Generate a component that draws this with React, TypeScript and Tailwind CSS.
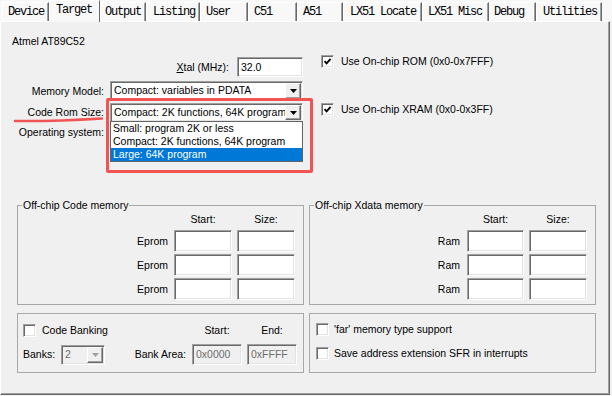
import React from 'react';

const sunken =
  'border border-t-[#a0a0a0] border-l-[#a0a0a0] border-r-white border-b-white shadow-[inset_1px_1px_0_#696969,inset_-1px_-1px_0_#e3e3e3]';

const tabs = [
  { label: 'Device', w: 'w-[47px]', pl: 'pl-[5px]' },
  { label: 'Target', w: 'w-[51px]', pl: 'pl-[6px]', active: true },
  { label: 'Output', w: 'w-[46px]', pl: 'pl-[4px]' },
  { label: 'Listing', w: 'w-[54px]', pl: 'pl-[6px]' },
  { label: 'User', w: 'w-[48px]', pl: 'pl-[5px]' },
  { label: 'C51', w: 'w-[49px]', pl: 'pl-[5px]' },
  { label: 'A51', w: 'w-[46px]', pl: 'pl-[5px]' },
  { label: 'LX51 Locate', w: 'w-[79px]', pl: 'pl-[6px]' },
  { label: 'LX51 Misc', w: 'w-[67px]', pl: 'pl-[5px]' },
  { label: 'Debug', w: 'w-[47px]', pl: 'pl-[4px]' },
  { label: 'Utilities', w: 'w-[66px]', pl: 'pl-[6px]' },
];

const Check: React.FC<{ checked?: boolean }> = ({ checked }) => (
  <span className={`flex h-[13px] w-[13px] shrink-0 items-center justify-center bg-white ${sunken}`}>
    {checked && (
      <svg width="9" height="9" viewBox="0 0 9 9">
        <path d="M1.5 4.2 L3.6 6.4 L7.6 1.8" fill="none" stroke="#000" strokeWidth="1.9" />
      </svg>
    )}
  </span>
);

const DropButton: React.FC<{ disabled?: boolean }> = ({ disabled }) => (
  <span className="flex h-full w-[16px] shrink-0 items-center justify-center border border-t-white border-l-white border-r-[#696969] border-b-[#696969] bg-[#f0f0f0] shadow-[inset_-1px_-1px_0_#a0a0a0]">
    <svg width="7" height="4" viewBox="0 0 7 4">
      <polygon points="0,0 7,0 3.5,4" fill={disabled ? '#a0a0a0' : '#000'} />
    </svg>
  </span>
);

const Select: React.FC<{
  value: string;
  className: string;
  disabled?: boolean;
  children?: React.ReactNode;
}> = ({ value, className, disabled, children }) => (
  <div
    className={`relative flex p-[1px] ${sunken} ${
      disabled ? 'bg-[#f0f0f0] text-[#6d6d6d]' : 'bg-white'
    } ${className}`}
  >
    <span className="flex-1 overflow-hidden whitespace-nowrap pl-[2px] leading-[15px]">{value}</span>
    <DropButton disabled={disabled} />
    {children}
  </div>
);

const Field: React.FC<{ value?: string; className: string; disabled?: boolean }> = ({
  value,
  className,
  disabled,
}) => (
  <div
    className={`flex items-center pl-[3px] ${sunken} ${
      disabled ? 'bg-[#f0f0f0] text-[#6d6d6d]' : 'bg-white'
    } ${className}`}
  >
    {value}
  </div>
);

const MemoryBox: React.FC<{ title: string; label: string; labelGap: string; col1: string; col2: string }> = ({
  title,
  label,
  labelGap,
  col1,
  col2,
}) => (
  <fieldset className="w-[287px] border border-[#a8a8a8] pb-[4px]">
    <legend className="ml-[4px] px-[1px]">{title}</legend>
    <div className="flex justify-end gap-[5px] pr-[8px] pt-[1px]">
      <span className={`${col1} text-center`}>Start:</span>
      <span className={`${col2} text-center`}>Size:</span>
    </div>
    <div className="mt-[4px] flex flex-col gap-[2px]">
      {[0, 1, 2].map((i) => (
        <div key={i} className="flex items-center justify-end gap-[5px] pr-[8px]">
          <span className={labelGap}>{label}</span>
          <Field className={`h-[22px] ${col1}`} />
          <Field className={`h-[22px] ${col2}`} />
        </div>
      ))}
    </div>
  </fieldset>
);

export default function App() {
  return (
    <div className="relative h-[396px] w-[612px] overflow-hidden bg-[#f0f0f0] font-['Liberation_Sans',Arial,sans-serif] text-[10.5px] leading-[13px] text-black">
      {/* tab strip */}
      <div className="flex h-[21px] items-end bg-[#f8f8f8] pl-[2px] font-['Liberation_Mono',monospace] text-[12px] tracking-[-1.2px]">
        {tabs.map((t) =>
          t.active ? (
            <div
              key={t.label}
              className={`relative z-10 -mb-px h-[22px] ${t.w} ${t.pl} border-t border-l border-t-white border-l-white border-r border-r-[#696969] bg-[#f8f8f8] pt-[2px] leading-[14px]`}
            >
              {t.label}
            </div>
          ) : (
            <div
              key={t.label}
              className={`h-[19px] ${t.w} ${t.pl} border-t border-l border-t-white border-l-white border-r border-r-[#696969] bg-[#f8f8f8] pt-[2px] leading-[14px] shadow-[inset_-1px_0_0_#a0a0a0]`}
            >
              {t.label}
            </div>
          )
        )}
      </div>

      {/* tab page */}
      <div className="h-[374px] w-[610px] border border-t-white border-l-white border-r-[#696969] border-b-[#696969] shadow-[inset_-1px_-1px_0_#a0a0a0]">
        <div className="pl-[11px] pt-[13px]">
          <div>Atmel AT89C52</div>
          <div className="flex">
            <div className="flex w-[291px] flex-col">
              <div className="mt-[9px] flex h-[20px] items-center">
                <span className="w-[217px] text-right">
                  <span className="underline">X</span>tal (MHz):
                </span>
                <Field value="32.0" className="ml-[8px] h-[20px] w-[66px]" />
              </div>
              <div className="mt-[4px] flex items-center">
                <span className="w-[92px] text-right">Memory Model:</span>
                <Select value="Compact: variables in PDATA" className="ml-[6px] h-[20px] w-[193px]" />
              </div>
              <div className="mt-[2px] flex items-center">
                <span className="w-[92px] text-right">Code Rom Size:</span>
                <Select value="Compact: 2K functions, 64K program" className="z-10 ml-[6px] h-[19px] w-[193px]">
                  <div className="absolute top-full left-[-1px] w-[193px] border border-[#646464] bg-white">
                    <div className="pl-[2px]">Small: program 2K or less</div>
                    <div className="pl-[2px]">Compact: 2K functions, 64K program</div>
                    <div className="bg-[#0078d7] pl-[2px] text-white">Large: 64K program</div>
                  </div>
                </Select>
              </div>
              <div className="mt-[4px] flex items-center">
                <span className="w-[92px] text-right">Operating system:</span>
              </div>
            </div>
            <div className="ml-[18px] flex flex-col pt-[7px]">
              <div className="flex h-[13px] items-center gap-[7px]">
                <Check checked />
                <span>Use On-chip ROM (0x0-0x7FFF)</span>
              </div>
              <div className="mt-[35px] flex h-[13px] items-center gap-[7px]">
                <Check checked />
                <span>Use On-chip XRAM (0x0-0x3FF)</span>
              </div>
            </div>
          </div>
        </div>

        <div className="mt-[60px] pl-[16px]">
          <div className="flex gap-[5px]">
            <MemoryBox title="Off-chip Code memory" label="Eprom" labelGap="mr-[1px]" col1="w-[58px]" col2="w-[58px]" />
            <MemoryBox title="Off-chip Xdata memory" label="Ram" labelGap="mr-[2px]" col1="w-[57px]" col2="w-[58px]" />
          </div>

          <div className="mt-[8px] flex gap-[5px]">
            <div className="w-[287px] border border-[#a8a8a8] pt-[10px] pb-[5px]">
              <div className="flex h-[13px] items-center pl-[5px] pr-[6px]">
                <Check />
                <span className="ml-[6px]">Code Banking</span>
                <span className="ml-auto w-[50px] text-center">Start:</span>
                <span className="ml-[5px] w-[50px] text-center">End:</span>
              </div>
              <div className="mt-[7px] flex h-[21px] items-center pl-[5px] pr-[6px]">
                <span>Banks:</span>
                <Select value="2" disabled className="ml-[6px] h-[20px] w-[44px]" />
                <span className="ml-auto mr-[6px]">Bank Area:</span>
                <Field value="0x0000" disabled className="h-[21px] w-[50px]" />
                <Field value="0xFFFF" disabled className="ml-[5px] h-[21px] w-[50px]" />
              </div>
            </div>
            <div className="w-[287px] border border-[#a8a8a8] pt-[9px] pb-[12px] pl-[6px]">
              <div className="flex h-[13px] items-center gap-[5px]">
                <Check />
                <span>'far' memory type support</span>
              </div>
              <div className="mt-[11px] flex h-[13px] items-center gap-[5px]">
                <Check />
                <span>Save address extension SFR in interrupts</span>
              </div>
            </div>
          </div>
        </div>
      </div>

      {/* annotation marks */}
      <div className="absolute top-[98px] left-[106px] z-20 h-[75px] w-[207px] rounded-[2px] border-[3px] border-[#f25454]" />
      <svg className="absolute top-[115px] left-[13px] z-20" width="92" height="9" viewBox="0 0 92 9">
        <path d="M2 6 Q 40 6.5 89 3.5" fill="none" stroke="#f25454" strokeWidth="2.4" strokeLinecap="round" />
      </svg>
    </div>
  );
}
